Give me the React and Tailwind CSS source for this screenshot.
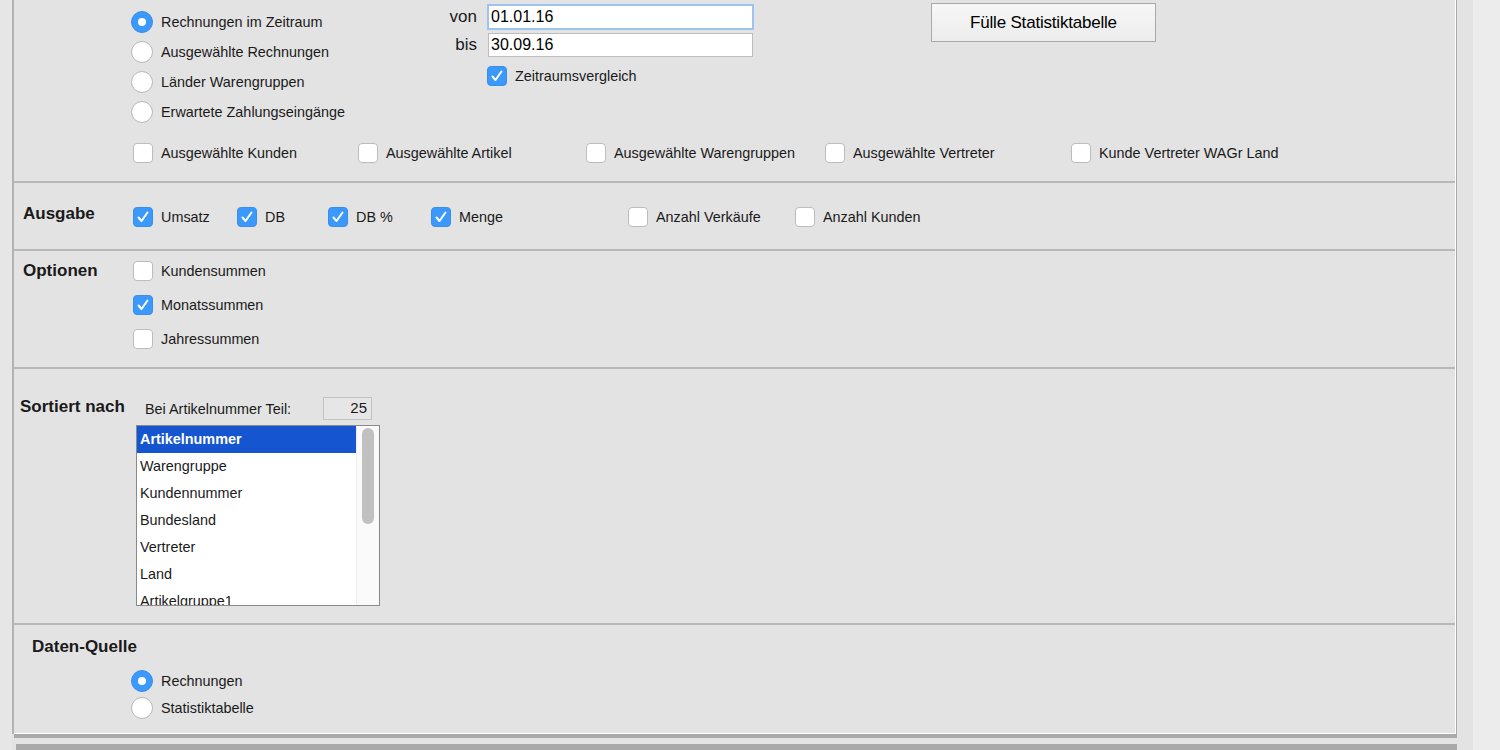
const font = { fontFamily: '"Liberation Sans", Arial, sans-serif' };

function Radio({ checked }) {
  return checked ? (
    <span className="w-[22px] h-[22px] rounded-full bg-[#3b99fc] border border-[#3a8ee8] flex items-center justify-center shrink-0">
      <span className="w-[8px] h-[8px] rounded-full bg-white" />
    </span>
  ) : (
    <span className="w-[22px] h-[22px] rounded-full bg-white border border-[#b8b8b8] shrink-0" />
  );
}

function Check({ checked }) {
  return checked ? (
    <span className="w-[20px] h-[20px] rounded-[4px] bg-[#3b99fc] border border-[#3a8ee8] flex items-center justify-center shrink-0">
      <svg width="14" height="14" viewBox="0 0 14 14" fill="none">
        <path d="M2.5 7.5 L5.5 11 L11.5 2.5" stroke="white" strokeWidth="2" strokeLinecap="round" strokeLinejoin="round" />
      </svg>
    </span>
  ) : (
    <span className="w-[20px] h-[20px] rounded-[4px] bg-white border border-[#bcbcbc] shrink-0" />
  );
}

function CheckItem({ label, checked, w }) {
  return (
    <div className={`flex items-center gap-[8px] h-[20px] shrink-0 ${w || ''}`}>
      <Check checked={checked} />
      <span className="pt-[2px] text-[14.4px] text-[#1a1a1a] whitespace-nowrap">{label}</span>
    </div>
  );
}

function RadioItem({ label, checked, h }) {
  return (
    <div className={`flex items-center gap-[8px] ${h}`}>
      <Radio checked={checked} />
      <span className="pt-[2px] text-[14.4px] text-[#1a1a1a] whitespace-nowrap">{label}</span>
    </div>
  );
}

const sortItems = ['Artikelnummer', 'Warengruppe', 'Kundennummer', 'Bundesland', 'Vertreter', 'Land', 'Artikelgruppe1'];

export default function App() {
  return (
    <div className="flex w-[1500px] h-[750px] overflow-hidden bg-[#e3e3e3] text-[#1a1a1a]" style={font}>
      <div className="w-[12px] shrink-0 bg-[#e6e6e6]" />

      <div className="w-[1445px] shrink-0 flex flex-col">
        <div className="h-[734px] border-l-2 border-l-[#b3b3b3] border-r border-r-[#a9a9a9]">
          <div className="h-full flex flex-col border-r border-r-white border-b border-b-white bg-[#e3e3e3]">
            {/* Section 1 */}
            <div className="h-[183px] shrink-0 border-b-2 border-[#b8b8b8] flex flex-col">
              <div className="h-[143px] flex pl-[117px]">
                <div className="w-[318px] pt-[7px] flex flex-col">
                  <RadioItem label="Rechnungen im Zeitraum" checked h="h-[30px]" />
                  <RadioItem label="Ausgewählte Rechnungen" h="h-[30px]" />
                  <RadioItem label="Länder Warengruppen" h="h-[30px]" />
                  <RadioItem label="Erwartete Zahlungseingänge" h="h-[30px]" />
                </div>
                <div className="w-[482px] flex flex-col">
                  <div className="mt-[4px] h-[26px] flex items-center">
                    <span className="w-[30px] text-right pr-[2px] text-[17px]">von</span>
                    <div className="ml-[8px] w-[267px] h-[26px] bg-white border-2 border-[#9cc3f2] flex items-center pl-[2px] text-[16px] text-black">01.01.16</div>
                  </div>
                  <div className="mt-[3px] h-[24px] flex items-center">
                    <span className="w-[30px] text-right pr-[2px] text-[17px]">bis</span>
                    <div className="ml-[9px] w-[265px] h-[24px] bg-white border border-[#bdbdbd] flex items-center pl-[2px] text-[16px] text-black">30.09.16</div>
                  </div>
                  <div className="mt-[9px] ml-[38px]">
                    <CheckItem label="Zeitraumsvergleich" checked />
                  </div>
                </div>
                <div className="pt-[3px]">
                  <button className="w-[225px] h-[39px] border border-[#a9a9a9] bg-gradient-to-b from-[#f7f7f7] to-[#ececec] text-[17px] text-black flex items-center justify-center tracking-[-0.2px]">
                    Fülle Statistiktabelle
                  </button>
                </div>
              </div>
              <div className="flex pl-[119px]">
                <CheckItem label="Ausgewählte Kunden" w="w-[225px]" />
                <CheckItem label="Ausgewählte Artikel" w="w-[228px]" />
                <CheckItem label="Ausgewählte Warengruppen" w="w-[239px]" />
                <CheckItem label="Ausgewählte Vertreter" w="w-[246px]" />
                <CheckItem label="Kunde Vertreter WAGr Land" />
              </div>
            </div>

            {/* Ausgabe */}
            <div className="h-[68px] shrink-0 border-b-2 border-[#b8b8b8] pt-[24px]">
              <div className="flex items-center h-[20px]">
                <div className="w-[119px] pl-[9px] text-[17px] font-bold mt-[-6px]">Ausgabe</div>
                <CheckItem label="Umsatz" checked w="w-[104px]" />
                <CheckItem label="DB" checked w="w-[91px]" />
                <CheckItem label="DB %" checked w="w-[103px]" />
                <CheckItem label="Menge" checked w="w-[197px]" />
                <CheckItem label="Anzahl Verkäufe" w="w-[167px]" />
                <CheckItem label="Anzahl Kunden" />
              </div>
            </div>

            {/* Optionen */}
            <div className="h-[118px] shrink-0 border-b-2 border-[#b8b8b8] pt-[10px] flex">
              <div className="w-[119px] pl-[9px] h-[20px] flex items-center text-[17px] font-bold">Optionen</div>
              <div className="flex flex-col gap-[14px]">
                <CheckItem label="Kundensummen" />
                <CheckItem label="Monatssummen" checked />
                <CheckItem label="Jahressummen" />
              </div>
            </div>

            {/* Sortiert nach */}
            <div className="h-[256px] shrink-0 border-b-2 border-[#b8b8b8] flex">
              <div className="w-[122px] pl-[6px] pt-[26px]">
                <div className="leading-[23px] text-[17px] font-bold whitespace-nowrap">Sortiert nach</div>
              </div>
              <div className="pt-[28px] flex flex-col">
                <div className="flex items-center h-[23px]">
                  <span className="pl-[9px] pt-[2px] w-[187px] text-[14.4px] whitespace-nowrap">Bei Artikelnummer Teil:</span>
                  <div className="w-[49px] h-[23px] border border-[#c2c2c2] bg-[#e6e6e6] flex items-center justify-end pr-[4px] text-[15px]">25</div>
                </div>
                <div className="mt-[5px] w-[244px] h-[181px] border border-[#8a8a8a] bg-white flex overflow-hidden">
                  <div className="w-[219px] flex flex-col">
                    {sortItems.map((it, i) => (
                      <div
                        key={it}
                        className={`h-[27px] shrink-0 flex items-center pl-[3px] text-[14.4px] ${i === 0 ? 'bg-[#1556d0] text-white font-bold' : 'text-[#1a1a1a]'}`}
                      >
                        {it}
                      </div>
                    ))}
                  </div>
                  <div className="flex-1 border-l border-[#ededed] bg-[#fafafa] pt-[2px] flex justify-center">
                    <div className="w-[12px] h-[96px] rounded-full bg-[#c1c1c1]" />
                  </div>
                </div>
              </div>
            </div>

            {/* Daten-Quelle */}
            <div className="flex-1 pt-[10px] flex flex-col">
              <div className="pl-[18px] leading-[23px] text-[17px] font-bold">Daten-Quelle</div>
              <div className="mt-[9px] pl-[117px] flex flex-col">
                <RadioItem label="Rechnungen" checked h="h-[27px]" />
                <RadioItem label="Statistiktabelle" h="h-[27px]" />
              </div>
            </div>
          </div>
        </div>
        <div className="h-[4px] bg-[#a9a9a9] ml-[2px]" />
        <div className="h-[6px]" />
        <div className="h-[6px] bg-[#a9a9a9] ml-[4px]" />
      </div>

      <div className="w-[16px] shrink-0 bg-[#e3e3e3]" />
      <div className="flex-1 bg-[#ececec]" />
    </div>
  );
}
